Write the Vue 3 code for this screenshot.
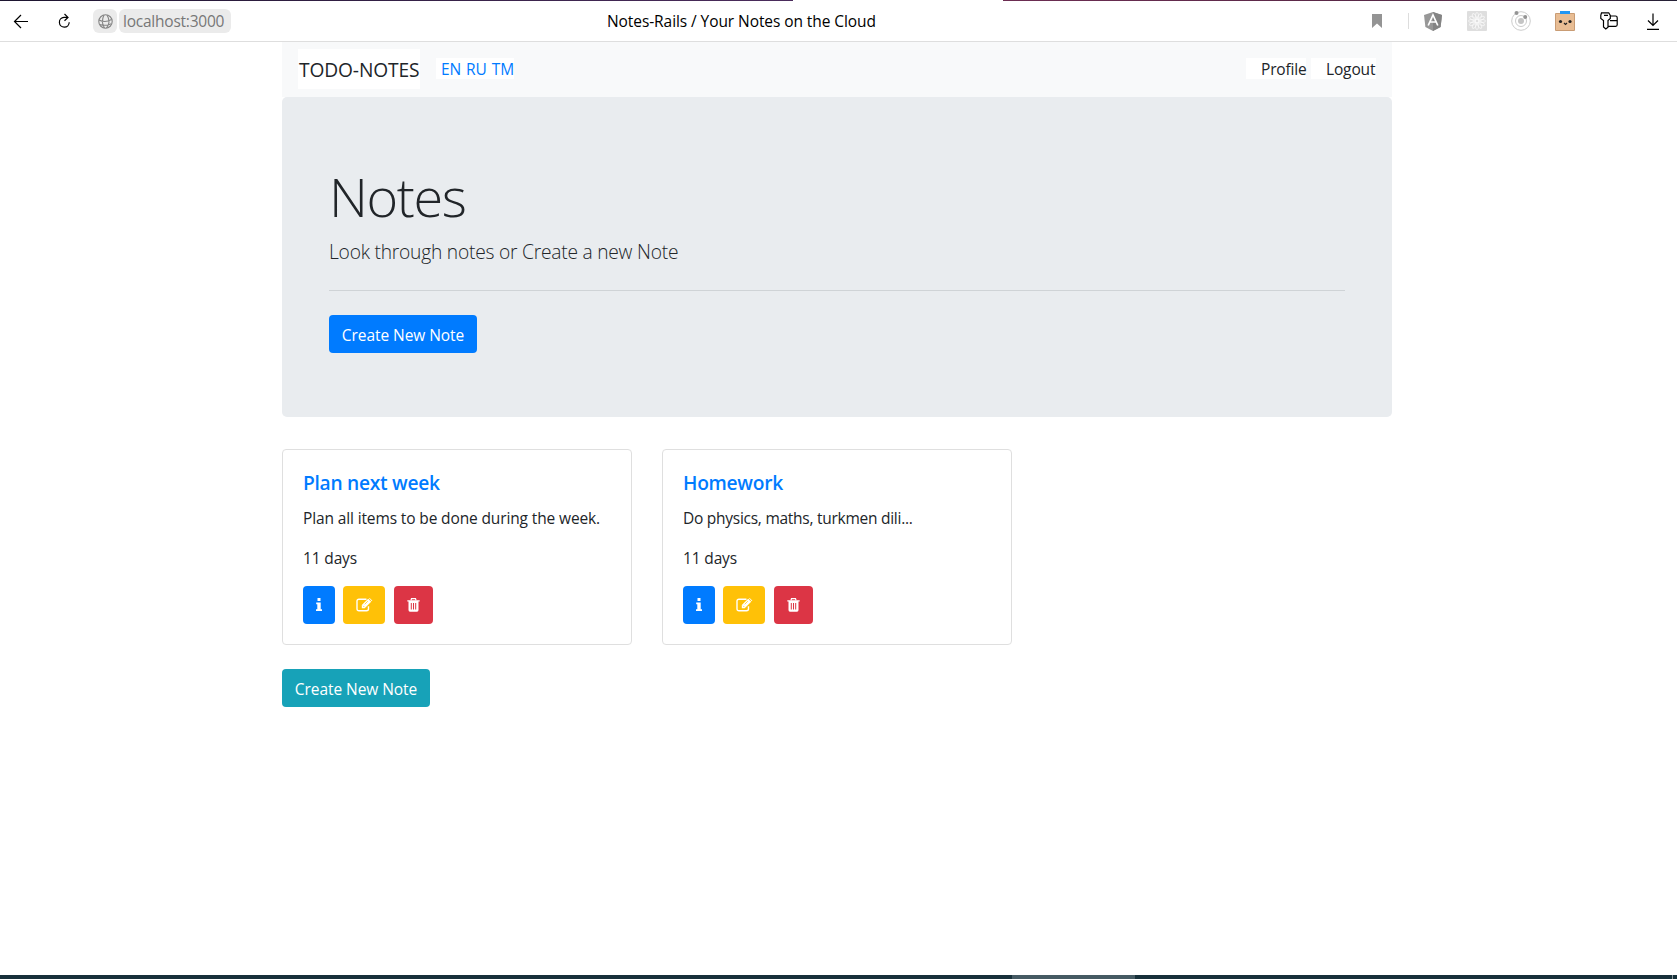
<script setup>
const notes = [
  { title: 'Plan next week', key: 'plan', body: 'Plan all items to be done during the week.', left: '11 days' },
  { title: 'Homework', key: 'home', body: 'Do physics, maths, turkmen dili...', left: '11 days' },
]
const petals = Array.from({ length: 12 }, (_, i) => i * 30)
</script>

<template>
  <div class="screen">
    <div class="tabstrip"><span class="strip-left"></span><span class="strip-right"></span></div>
    <header class="toolbar">
      <div class="side">
        <svg class="back" width="16" height="16" viewBox="0 0 16 16"><path d="M15 8.500H1.500M8 2 1.500 8.500 8 15" /></svg>
        <svg class="reload" width="14" height="16" viewBox="0 0 14 16"><path d="M9.500 4.400H6A4.900 4.900 0 1 0 11.200 9.300M6.500 1 10 4.400 6.500 7.800" /></svg>
        <span class="globe">
          <svg width="15" height="15" viewBox="0 0 15 15"><circle cx="7.500" cy="7.500" r="6.700" /><path d="M1 6c4 2 9 1.500 12.500-.5M1.600 10.500c4 1.300 8 1 11.700-.8M6 1C4 5 4 10 6.500 14M9 1c2.500 4 2.500 9-.5 13" /></svg>
        </span>
        <span class="url"><span>localhost:3000</span></span>
      </div>
      <div class="page-title"><span>Notes-Rails / Your Notes on the Cloud</span></div>
      <div class="tools">
        <svg class="mark" width="10" height="14" viewBox="0 0 10 14"><path d="M0 0h10v14L5 9.500 0 14z" fill="#949494" /></svg>
        <span class="sep"></span>
        <svg class="angular" width="18" height="19" viewBox="0 0 18 19"><path d="M9 0 18 3l-1.400 12L9 19l-7.600-4L0 3z" fill="#979797" /><path d="M9 0 18 3l-1.400 12L9 19z" fill="#848484" /><path d="M4.200 13.500 9 3l4.800 10.500M6 10h6" fill="none" stroke="#fff" stroke-width="1.700" /></svg>
        <svg class="atom" width="20" height="20" viewBox="0 0 20 20"><rect width="20" height="20" rx="1" fill="#dedede" /><g fill="none" stroke="#fafafa" stroke-width=".7"><ellipse v-for="a in petals" :key="a" cx="10" cy="5" rx="1.600" ry="3.500" :transform="`rotate(${a} 10 10)`" /><circle cx="10" cy="10" r="2" /></g></svg>
        <svg class="orbit" width="20" height="20" viewBox="0 0 20 20"><g fill="none" stroke="#ccc"><circle cx="10" cy="10" r="9.300" /><circle cx="10" cy="10" r="5.500" /></g><circle cx="10" cy="10" r="3" fill="#c4c4c4" /><circle cx="5.500" cy="2" r="2" fill="#949494" /><circle cx="14.200" cy="6" r="2" fill="#949494" /></svg>
        <svg class="box" width="20" height="20" viewBox="0 0 20 20"><rect y="2" width="20" height="18" rx="1" fill="#c99c74" /><rect x="1" y="3" width="18" height="16" fill="#e8bd94" /><path d="M5 0h10v3H5z" fill="#2196f3" /><circle cx="5.500" cy="10.500" r="1.600" fill="#222" /><circle cx="15" cy="10.500" r="1.600" fill="#222" /><path d="m9 12 1.500 1.500L12 12" fill="none" stroke="#222" stroke-width="1.200" /></svg>
        <svg class="keys" width="18" height="18" viewBox="0 0 18 18"><path d="M1.500.8h7.200l1.600 2.600v3L8 8.500v6.700L5.800 17 3.500 15V8.500L.8 6.400v-3zM4 3.300h4M10.300 4h5.200q1.700 0 1.700 1.800v7q0 1.500-1.500 1.500H8M10 8.700h7" /></svg>
        <svg class="down" width="12" height="17" viewBox="0 0 12 17"><path d="M6 .5V12M1 7.500 6 12.500 11 7.500M0 16.300h12" /></svg>
      </div>
    </header>

    <main class="container">
      <nav class="navbar">
        <a class="brand">TODO-NOTES</a>
        <div class="langs"><a>EN</a><a>RU</a><a>TM</a></div>
        <div class="account"><a class="profile">Profile</a><a class="logout">Logout</a></div>
      </nav>
      <section class="jumbotron">
        <h1><span>Notes</span></h1>
        <p class="lead"><span>Look through notes or Create a new Note</span></p>
        <hr />
        <button class="btn primary create"><span>Create New Note</span></button>
      </section>
      <section class="cards">
        <article v-for="n in notes" :key="n.key" class="card" :class="n.key">
          <h5><span>{{ n.title }}</span></h5>
          <p class="body"><span>{{ n.body }}</span></p>
          <p class="days"><span>{{ n.left }}</span></p>
          <div class="actions">
            <button class="btn primary info"><svg width="6" height="14" viewBox="0 0 6 14"><path d="M1.500 0h3v3h-3zM.2 4.500h4.500v6.700H6V13H0v-1.800h1.300V6.300H.2z" fill="#fff" /></svg></button>
            <button class="btn edit"><svg width="17" height="14" viewBox="0 0 17 14"><path d="M12.500 8.300v2.500q0 2-2 2H3q-2 0-2-2V3.300q0-2 2-2h7.500" fill="none" stroke="#fff" stroke-width="1.400" /><path d="M5.800 10.200V7.100L12.200.7l3 3-6.500 6.500zM12.900.1l.7-.1L16.300 2.600l-.6.700z" fill="#fff" /><path d="m7.100 7.800 1.300 1.300M8.700 6.300l3.200-3.200" stroke="#ffc107" stroke-width=".7" /></svg></button>
            <button class="btn trash"><svg width="13" height="14" viewBox="0 0 13 14"><path d="M4 2.300 4.500.7h4L9 2.300" fill="none" stroke="#fff" stroke-width="1.200" /><path d="M.3 2.200h12.400v1.400h-1.200v8.500q0 1.700-1.500 1.700H3q-1.500 0-1.500-1.700V3.600H.3z" fill="#fff" /><path d="M4.300 5v6.500M6.500 5v6.500M8.700 5v6.500" stroke="#dc3545" stroke-width="1" /></svg></button>
          </div>
        </article>
      </section>
      <button class="btn teal create"><span>Create New Note</span></button>
    </main>
    <footer class="taskbar"><span class="active-task"></span><span class="peek"></span></footer>
  </div>
</template>

<style>
body { margin: 0; background: #fff; }
</style>

<style scoped>
* { box-sizing: border-box; }
.screen { width: 1677px; height: 979px; overflow: hidden; display: flex; flex-direction: column; background: #fff; font-family: "Open Sans", "Noto Sans", sans-serif; font-size: 15.500px; line-height: 24px; color: #212529; white-space: nowrap; }
h1, h5, p { margin: 0; }
.tabstrip { height: 1px; flex: none; display: flex; justify-content: space-between; background: #fff; }
.strip-left { width: 793px; background: linear-gradient(90deg, #1d1530, #4b2c5c); }
.strip-right { width: 674px; background: linear-gradient(90deg, #6c2d52, #532744 70%, #242035); }
.toolbar { height: 41px; flex: none; border-bottom: 1px solid #dedede; display: flex; color: #000; }
.side { width: 607px; display: flex; align-items: center; }
.back, .reload, .keys, .down { fill: none; stroke: #000; stroke-width: 1.200; }
.back { margin-left: 13px; }
.reload { margin-left: 29px; }
.globe { width: 24px; height: 24px; margin-left: 21px; border-radius: 6px; background: #ebebeb; display: flex; align-items: center; justify-content: center; }
.globe svg { fill: none; stroke: #858585; stroke-width: 1.100; }
.url { width: 112px; height: 24px; margin-left: 2px; padding-left: 4px; border-radius: 6px; background: #ebebeb; color: #777; letter-spacing: -0.230px; line-height: 25px; }
.page-title { line-height: 41px; letter-spacing: -0.080px; }
.tools { margin-left: auto; padding-right: 18px; display: flex; align-items: center; }
.sep { width: 1px; height: 16px; background: #ddd; margin: 0 15px 0 26px; }
.atom { margin-left: 25px; }
.orbit { margin-left: 24px; }
.box { margin-left: 24px; }
.keys { margin-left: 25px; }
.down { margin-left: 29px; }
.container { width: 1110px; margin-left: 282px; flex: 1; }
.navbar { height: 55px; background: #f8f9fa; padding: 0 16px; display: flex; align-items: center; }
.brand { height: 40px; width: 122px; line-height: 42px; margin-top: -1px; padding-left: 1px; background: #fff; font-size: 19.200px; letter-spacing: -0.120px; }
.langs { height: 21px; width: 78px; margin: -2px 0 0 16px; padding-left: 5px; line-height: 23px; background: #fff; color: #007bff; display: flex; gap: 5px; letter-spacing: -0.100px; }
.account { margin: -2px 0 0 auto; display: flex; gap: 5px; line-height: 23px; }
.account a { height: 21px; background: #fff; padding-left: 15px; letter-spacing: -0.150px; }
.profile { width: 60px; }
.logout { width: 65px; }
.jumbotron { height: 320px; border-radius: 5px; background: #e9ecef; padding: 64px 47px; }
h1 { font-weight: 300; font-size: 54px; line-height: 67px; letter-spacing: -1.400px; margin-top: 2px; }
.lead { font-weight: 300; font-size: 19.200px; line-height: 30px; margin-top: 7px; letter-spacing: -0.220px; }
hr { border: 0; height: 1px; background: #cfd3d6; margin: 23px 0 24px; }
.btn { display: flex; align-items: center; justify-content: center; height: 38px; padding: 0; border: 0; border-radius: 4px; color: #fff; font-family: inherit; font-size: 15.500px; }
.primary { background: #007bff; }
.teal { background: #17a2b8; margin-top: 24px; }
.create { width: 148px; letter-spacing: -0.070px; padding-top: 1px; }
.cards { margin-top: 32px; display: flex; gap: 30px; }
.card { width: 350px; height: 196px; border: 1px solid #dfdfdf; border-radius: 4px; padding: 20px; }
h5 { font-size: 19.200px; font-weight: 600; line-height: 26px; height: 24px; color: #007bff; letter-spacing: -0.280px; }
.body { margin-top: 12px; letter-spacing: -0.130px; }
.home .body { letter-spacing: -0.260px; }
.days { margin-top: 16px; letter-spacing: -0.150px; line-height: 25px; height: 24px; }
.actions { display: flex; margin-top: 16px; }
.info { width: 32px; }
.edit { width: 42px; margin-left: 8px; background: #ffc107; }
.trash { width: 39px; margin-left: 9px; background: #dc3545; }
.taskbar { height: 4px; flex: none; background: #17303a; display: flex; }
.active-task { width: 123px; margin-left: 1012px; background: #455a63; }
.peek { width: 1px; margin-left: auto; margin-right: 4px; background: #8b979c; }
</style>
